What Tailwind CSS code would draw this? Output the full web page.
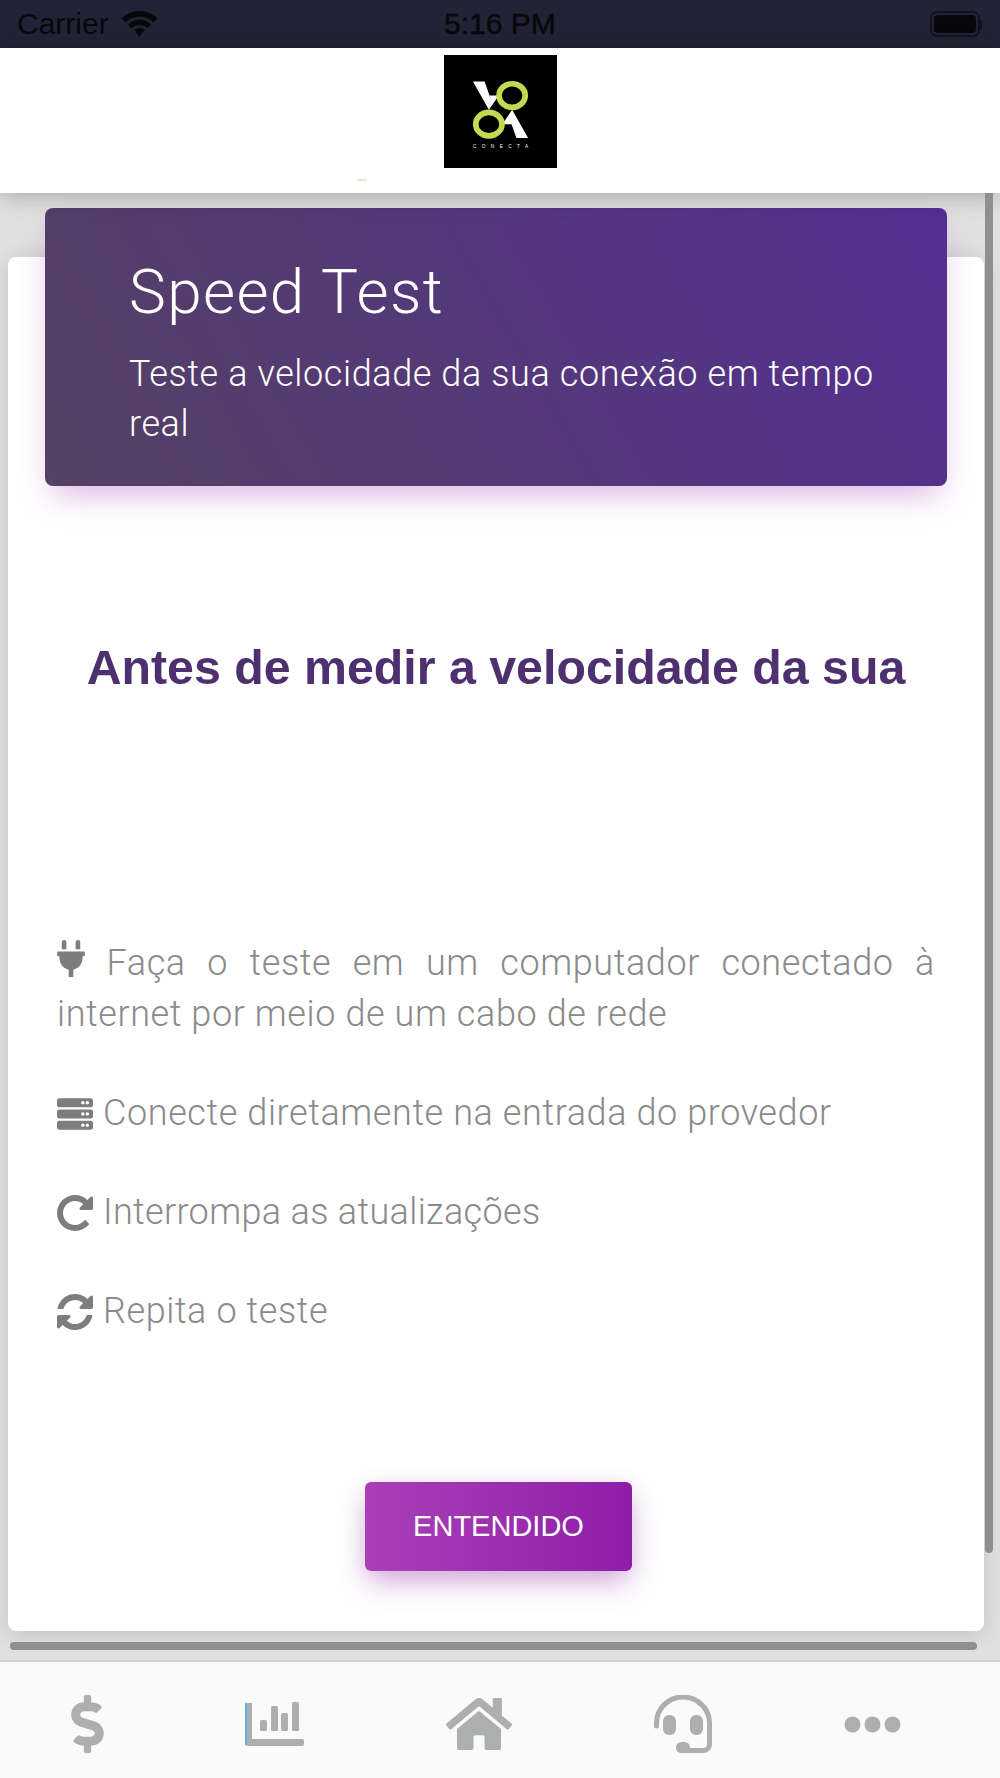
<!DOCTYPE html>
<html lang="pt-BR">
<head>
    <meta charset="UTF-8">
    <meta name="viewport" content="width=device-width, initial-scale=1.0">
    <title>Speed Test - Voa Conecta</title>
    <script src="https://cdn.jsdelivr.net/npm/@tailwindcss/browser@4"></script>
</head>
<body class="bg-white font-['Liberation_Sans',sans-serif]">
    <div class="relative w-[1000px] h-[1778px] overflow-hidden flex flex-col bg-[#e0e0e0]">

        <!-- Barra de status -->
        <div class="h-[48px] shrink-0 bg-[#222336] flex items-center justify-between pl-[17px] pr-[18px] relative text-[#08080c] text-[30px]">
            <div class="flex items-center gap-[12px]">
                <span class="leading-none">Carrier</span>
                <svg class="w-[37px] h-[27px]" viewBox="0 0 36 27" fill="#08080c">
                    <path d="M18 0C11 0 5 2.500 0 7.500L4 11.500C8 8 12.500 5.500 18 5.500S28 8 32 11.500L36 7.500C31 2.500 25 0 18 0Z"/>
                    <path d="M18 8.500C13.500 8.500 10 10 6.500 13.500L10 17C12.500 15 15 14 18 14S23.500 15 26 17L29.500 13.500C26 10 22.500 8.500 18 8.500Z"/>
                    <path d="M18 17C16 17 14.300 17.700 12.800 19L18 26L23.200 19C21.700 17.700 20 17 18 17Z"/>
                </svg>
            </div>
            <span class="absolute left-[444px] leading-none [-webkit-text-stroke:0.5px_#08080c]">5:16 PM</span>
            <div class="flex items-center">
                <div class="w-[50px] h-[26px] rounded-[7px] border-2 border-[#08080c]/60 p-[2px]">
                    <div class="w-full h-full rounded-[4px] bg-[#08080c]"></div>
                </div>
                <div class="w-[2px] h-[9px] bg-[#08080c]/60"></div>
            </div>
        </div>

        <!-- Topo com logo -->
        <header class="relative z-20 h-[145px] shrink-0 bg-white shadow-[0_2px_22px_rgba(0,0,0,0.28)] pt-[7px] flex justify-center">
            <svg class="w-[113px] h-[113px]" viewBox="0 0 340 340">
                <rect width="340" height="340" fill="#000"/>
                <polygon points="87,80 122,80 137,122 165,122 135,165" fill="#fff"/>
                <polygon points="87,80 122,80 137,122 165,122 135,165" fill="#fff" transform="rotate(180 170 165)"/>
                <ellipse cx="205" cy="122" rx="39.500" ry="35.500" fill="none" stroke="#c6d84e" stroke-width="17"/>
                <ellipse cx="135" cy="208" rx="39.500" ry="35.500" fill="none" stroke="#c6d84e" stroke-width="17"/>
                <text x="87" y="279" font-size="14" fill="#fff" textLength="166" font-family="Liberation Sans, sans-serif">CONECTA</text>
            </svg>
            <div class="absolute left-[357px] top-[131px] w-[10px] h-[2px] rounded-b-full bg-[#f5dccc]"></div>
        </header>

        <!-- Conteudo -->
        <main class="flex-1 min-h-0 pt-[64px] px-[8px]">
            <div class="w-[976px] h-[1374px] bg-white rounded-[8px] shadow-[0_3px_20px_rgba(0,0,0,0.14)] flex flex-col">
                <div class="-mt-[49px] mx-[37px] h-[278px] rounded-[8px] pt-[48px] pl-[84px] pr-[50px] text-white bg-linear-[60deg,#544163,#542f92] shadow-[0_16px_30px_-8px_rgba(156,39,176,0.35)] font-['Roboto',sans-serif] font-light">
                    <h1 class="text-[62px] leading-[72px] tracking-[1.4px]">Speed Test</h1>
                    <p class="mt-[21px] text-[36px] leading-[50px] tracking-[0.6px]">Teste a velocidade da sua conexão em tempo real</p>
                </div>

                <h2 class="mt-[155px] text-center text-[48.3px] leading-[52px] font-bold text-[#4e3070]">Antes de medir a velocidade da sua</h2>

                <div class="mt-[245px] px-[49px] text-[36px] leading-[51px] tracking-[0.6px] text-[#8a8a8a] font-['Roboto',sans-serif] font-light">
                    <p class="text-justify">
                        <svg class="inline-block w-[28px] h-[37px] align-[-2px]" viewBox="0 0 384 512" fill="#7d7d7d"><path d="M320,32a32,32,0,0,0-64,0v96h64Zm48,128H16A16,16,0,0,0,0,176v32a16,16,0,0,0,16,16H32v32A160.070,160.070,0,0,0,160,412.800V512h64V412.800A160.070,160.070,0,0,0,352,256V224h16a16,16,0,0,0,16-16V176A16,16,0,0,0,368,160ZM128,32a32,32,0,0,0-64,0v96h64Z"/></svg>
                        Faça o teste em um computador conectado à internet por meio de um cabo de rede
                    </p>
                    <p class="mt-[48px] flex items-center gap-[10px]">
                        <svg class="w-[36px] h-[36px] shrink-0" viewBox="0 0 512 512" fill="#7d7d7d"><path d="M480 160H32c-17.673 0-32-14.327-32-32V64c0-17.673 14.327-32 32-32h448c17.673 0 32 14.327 32 32v64c0 17.673-14.327 32-32 32zm-48-88c-13.255 0-24 10.745-24 24s10.745 24 24 24 24-10.745 24-24-10.745-24-24-24zm-64 0c-13.255 0-24 10.745-24 24s10.745 24 24 24 24-10.745 24-24-10.745-24-24-24zm112 248H32c-17.673 0-32-14.327-32-32v-64c0-17.673 14.327-32 32-32h448c17.673 0 32 14.327 32 32v64c0 17.673-14.327 32-32 32zm-48-88c-13.255 0-24 10.745-24 24s10.745 24 24 24 24-10.745 24-24-10.745-24-24-24zm-64 0c-13.255 0-24 10.745-24 24s10.745 24 24 24 24-10.745 24-24-10.745-24-24-24zm112 248H32c-17.673 0-32-14.327-32-32v-64c0-17.673 14.327-32 32-32h448c17.673 0 32 14.327 32 32v64c0 17.673-14.327 32-32 32zm-48-88c-13.255 0-24 10.745-24 24s10.745 24 24 24 24-10.745 24-24-10.745-24-24-24zm-64 0c-13.255 0-24 10.745-24 24s10.745 24 24 24 24-10.745 24-24-10.745-24-24-24z"/></svg>
                        <span>Conecte diretamente na entrada do provedor</span>
                    </p>
                    <p class="mt-[48px] flex items-center gap-[10px]">
                        <svg class="w-[36px] h-[36px] shrink-0" viewBox="128 128 1536 1536" fill="#7d7d7d"><path d="M1664 256v448q0 26-19 45t-45 19h-448q-42 0-59-40-17-39 14-69l138-138q-148-137-349-137-104 0-198.500 40.500t-163.500 109.500-109.500 163.500-40.500 198.500 40.500 198.500 109.500 163.500 163.500 109.500 198.500 40.500q119 0 225-52t179-147q7-10 23-12 15 0 25 9l137 138q9 8 9.500 20.500t-7.500 22.500q-109 132-264 204.500t-327 72.500q-156 0-298-61t-245-164-164-245-61-298 61-298 164-245 245-164 298-61q147 0 284.500 55.500t244.500 156.500l130-129q29-31 70-14 39 17 39 59z"/></svg>
                        <span class="tracking-[0.35px]">Interrompa as atualizações</span>
                    </p>
                    <p class="mt-[48px] flex items-center gap-[10px]">
                        <svg class="w-[36px] h-[36px] shrink-0" viewBox="128 128 1536 1536" fill="#7d7d7d"><path d="M1639 1056q0 5-1 7-64 268-268 434.500t-478 166.500q-146 0-282.500-55t-243.500-157l-129 129q-19 19-45 19t-45-19-19-45v-448q0-26 19-45t45-19h448q26 0 45 19t19 45-19 45l-137 137q71 66 161 102t187 36q134 0 250-65t186-179q11-17 53-117 8-23 30-23h192q13 0 22.500 9.500t9.500 22.500zm25-800v448q0 26-19 45t-45 19h-448q-26 0-45-19t-19-45 19-45l138-138q-148-137-349-137-134 0-250 65t-186 179q-11 17-53 117-8 23-30 23h-199q-13 0-22.500-9.500t-9.500-22.500v-7q65-268 270-434.500t480-166.500q146 0 284 55.500t245 156.500l130-129q19-19 45-19t45 19 19 45z"/></svg>
                        <span>Repita o teste</span>
                    </p>
                </div>

                <button class="mt-[145px] ml-[357px] w-[267px] h-[89px] rounded-[6px] text-white text-[29px] bg-gradient-to-r from-[#ab3fb8] to-[#8e1ca8] shadow-[0_14px_30px_-4px_rgba(156,39,176,0.38),0_4px_24px_rgba(0,0,0,0.08)]">ENTENDIDO</button>
            </div>
        </main>

        <!-- Barras de rolagem -->
        <div class="absolute z-30 left-[985px] top-[193px] w-[8px] h-[1360px] bg-[#8f8f8f] rounded-b-full"></div>
        <div class="absolute z-30 left-[10px] top-[1642px] w-[967px] h-[8px] bg-[#8f8f8f] rounded-full"></div>

        <!-- Menu inferior -->
        <nav class="relative z-20 h-[118px] shrink-0 bg-[#fafafa] border-t-2 border-[#cfcfcf] flex items-center pt-[8px] pl-[71px]">
            <svg class="w-[33px] h-[58px]" viewBox="0 0 288 512" fill="#adafae"><path d="M209.200 233.400l-108-31.600C88.700 198.200 80 186.500 80 173.500c0-16.300 13.200-29.500 29.500-29.500h66.300c12.200 0 24.200 3.700 34.200 10.500 6.100 4.100 14.300 3.100 19.500-2l34.800-34c7.100-6.900 6.100-18.400-1.800-24.500C238 74.800 207.400 64.100 176 64V16c0-8.800-7.200-16-16-16h-32c-8.800 0-16 7.200-16 16v48h-2.500C45.800 64-5.400 118.700.5 183.600c4.200 46.100 39.400 83.600 83.800 96.600l102.500 30c12.500 3.700 21.200 15.300 21.200 28.300 0 16.300-13.200 29.500-29.500 29.500h-66.300C100 368 88 364.300 78 357.500c-6.100-4.100-14.300-3.100-19.500 2l-34.800 34c-7.100 6.900-6.100 18.400 1.800 24.500 24.500 19.200 55.100 29.900 86.500 30v48c0 8.800 7.200 16 16 16h32c8.800 0 16-7.200 16-16v-48.200c46.600-.9 90.300-28.600 105.700-72.700 21.500-61.600-14.600-124.800-72.500-141.700z"/></svg>
            <svg class="ml-[141px] w-[59px] h-[44px]" viewBox="0 0 59 44" fill="#adafae">
                <path d="M7 0V36H57A2 2 0 0 1 59 38V41A2 2 0 0 1 57 43H3A3 3 0 0 1 0 40V0Z" transform="translate(0 1)"/>
                <rect x="15" y="18" width="7" height="11" rx="1.500"/>
                <rect x="26" y="4" width="7" height="25" rx="1.500"/>
                <rect x="36" y="11" width="7" height="18" rx="1.500"/>
                <rect x="47" y="0" width="7" height="29" rx="1.500"/>
                <rect x="0" y="1" width="2" height="42" fill="#5db2e6"/>
            </svg>
            <svg class="ml-[142px] w-[66px] h-[52px]" viewBox="0 32 576 448" preserveAspectRatio="none" fill="#adafae"><path d="M280.370 148.260L96 300.110V464a16 16 0 0 0 16 16l112.060-.29a16 16 0 0 0 15.920-16V368a16 16 0 0 1 16-16h64a16 16 0 0 1 16 16v95.640a16 16 0 0 0 16 16.050L464 480a16 16 0 0 0 16-16V300L295.670 148.260a12.190 12.190 0 0 0-15.300 0zM571.600 251.470L488 182.560V44.050a12 12 0 0 0-12-12h-56a12 12 0 0 0-12 12v72.610L318.470 43a48 48 0 0 0-61 0L4.340 251.470a12 12 0 0 0-1.600 16.900l25.500 31A12 12 0 0 0 45.150 301l235.220-193.740a12.190 12.190 0 0 1 15.300 0L530.900 301a12 12 0 0 0 16.900-1.600l25.500-31a12 12 0 0 0-1.700-16.930z"/></svg>
            <svg class="ml-[142px] w-[58px] h-[58px]" viewBox="0 0 58 58" fill="none">
                <path d="M2.500 31V28A26.500 26 0 0 1 55.500 28V50A6 6 0 0 1 49.500 55.500H30" stroke="#adafae" stroke-width="5" stroke-linecap="round"/>
                <rect x="9" y="20" width="13" height="20" rx="6" fill="#adafae"/>
                <rect x="36" y="20" width="13" height="20" rx="6" fill="#adafae"/>
                <rect x="22" y="47" width="14" height="11" rx="5.500" fill="#adafae"/>
            </svg>
            <svg class="ml-[132px] w-[57px] h-[17px]" viewBox="0 0 57 17" fill="#adafae"><circle cx="8.500" cy="8.500" r="8"/><circle cx="28.500" cy="8.500" r="8"/><circle cx="48.500" cy="8.500" r="8"/></svg>
        </nav>
    </div>
</body>
</html>
